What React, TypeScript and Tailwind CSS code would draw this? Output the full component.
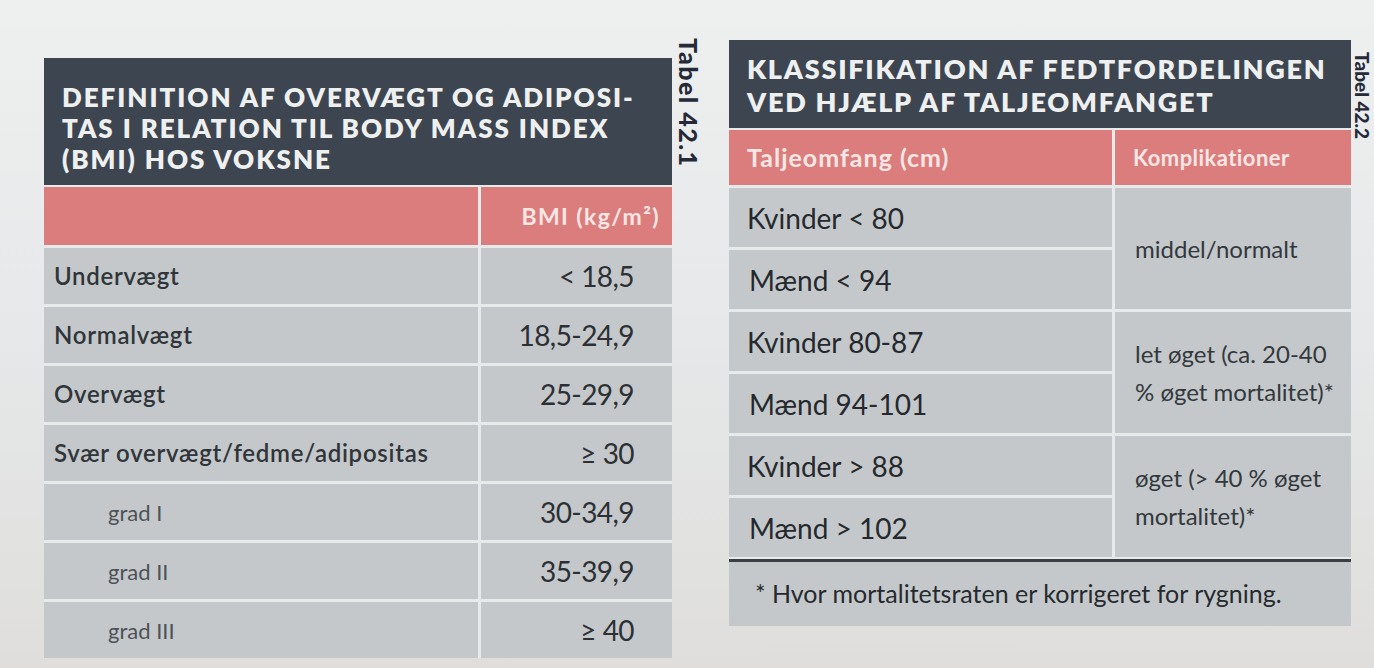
const font = { fontFamily: 'Lato, "Open Sans", sans-serif' }

const bmiRows = [
  { label: 'Undervægt', value: '< 18,5' },
  { label: 'Normalvægt', value: '18,5-24,9' },
  { label: 'Overvægt', value: '25-29,9' },
  { label: 'Svær overvægt/fedme/adipositas', value: '≥ 30' },
  { label: 'grad I', value: '30-34,9', sub: true },
  { label: 'grad II', value: '35-39,9', sub: true },
  { label: 'grad III', value: '≥ 40', sub: true },
]

const waistGroups = [
  { women: 'Kvinder < 80', men: 'Mænd < 94', risk: ['middel/normalt'] },
  { women: 'Kvinder 80-87', men: 'Mænd 94-101', risk: ['let øget (ca. 20-40', '% øget mortalitet)*'] },
  { women: 'Kvinder > 88', men: 'Mænd > 102', risk: ['øget (> 40 % øget', 'mortalitet)*'] },
]

const TableLabel = ({ children, className }: { children: string; className?: string }) => (
  <div className={`[writing-mode:vertical-rl] font-black leading-none text-[#262a38] ${className ?? ''}`}>
    {children}
  </div>
)

export default function App() {
  return (
    <div
      style={font}
      className="flex h-[668px] w-full items-start overflow-hidden bg-gradient-to-b from-[#eef0f0] via-[#e6e8e9] to-[#dfdedc]"
    >
      {/* Tabel 42.1 */}
      <section className="ml-[44px] mt-[58px] w-[628px] bg-[#e7eaeb]">
        <div className="h-[127px] bg-[#3d4550] px-[18px] pt-[24px] text-[26px] font-extrabold uppercase leading-[31px] tracking-[0.075em] text-[#eef0f0]">
          Definition af overvægt og adiposi-<br />
          tas i relation til body mass index<br />
          (BMI) hos voksne
        </div>
        <div className="grid grid-cols-[434px_1fr] gap-[3px] pt-[2px]">
          <div className="h-[58px] bg-[#dc7d7d]" />
          <div className="flex h-[58px] items-center justify-end bg-[#dc7d7d] pr-[12px] text-[23px] font-bold tracking-[0.06em] text-[#f6e6e4]">
            BMI (kg/m²)
          </div>
          {bmiRows.map((r) => (
            <div key={r.label} className="contents">
              <div
                className={`flex h-[56px] items-center bg-[#c4c8ca] ${
                  r.sub
                    ? 'pl-[64px] text-[22px] font-normal text-[#4d5257]'
                    : 'pl-[10px] text-[24px] font-semibold tracking-[0.03em] text-[#30353a]'
                }`}
              >
                {r.label}
              </div>
              <div className="flex h-[56px] items-center justify-end bg-[#c4c8ca] pr-[38px] text-[28px] tracking-[-0.02em] text-[#2c3035]">
                {r.value}
              </div>
            </div>
          ))}
        </div>
      </section>

      <TableLabel className="ml-[4px] mt-[38px] text-[25px] tracking-[0.06em]">Tabel 42.1</TableLabel>

      {/* Tabel 42.2 */}
      <section className="ml-[28px] mt-[40px] w-[622px] bg-[#e7eaeb]">
        <div className="h-[88px] bg-[#3d4550] px-[18px] pt-[12px] text-[27px] font-extrabold uppercase leading-[33px] tracking-[0.065em] text-[#eef0f0]">
          Klassifikation af fedtfordelingen<br />
          ved hjælp af taljeomfanget
        </div>
        <div className="grid grid-cols-[383px_1fr] gap-[3px] pt-[2px]">
          <div className="flex h-[55px] items-center bg-[#dc7d7d] pl-[18px] text-[25px] font-bold tracking-[0.04em] text-[#f6e6e4]">
            Taljeomfang (cm)
          </div>
          <div className="flex h-[55px] items-center bg-[#dc7d7d] pl-[18px] text-[22px] font-bold tracking-[0.02em] text-[#f6e6e4]">
            Komplikationer
          </div>
          {waistGroups.map((g) => (
            <div key={g.women} className="contents">
              <div className="col-start-1 flex h-[59px] items-center bg-[#c4c8ca] pl-[18px] text-[28px] text-[#25292e]">
                {g.women}
              </div>
              <div className="row-span-2 flex flex-col justify-center bg-[#c4c8ca] pl-[20px] text-[24px] leading-[38px] text-[#33383d]">
                {g.risk.map((line) => (
                  <span key={line}>{line}</span>
                ))}
              </div>
              <div className="col-start-1 flex h-[59px] items-center bg-[#c4c8ca] pl-[20px] text-[28px] text-[#25292e]">
                {g.men}
              </div>
            </div>
          ))}
        </div>
        <div className="mt-[2px] h-[3px] bg-[#3a3f46]" />
        <div className="flex h-[64px] items-center bg-[#c4c8ca] pl-[26px] text-[25px] text-[#262a2f]">
          * Hvor mortalitetsraten er korrigeret for rygning.
        </div>
      </section>

      <TableLabel className="ml-[2px] mt-[52px] text-[19px] text-[#3a3a3a]">Tabel 42.2</TableLabel>
    </div>
  )
}
